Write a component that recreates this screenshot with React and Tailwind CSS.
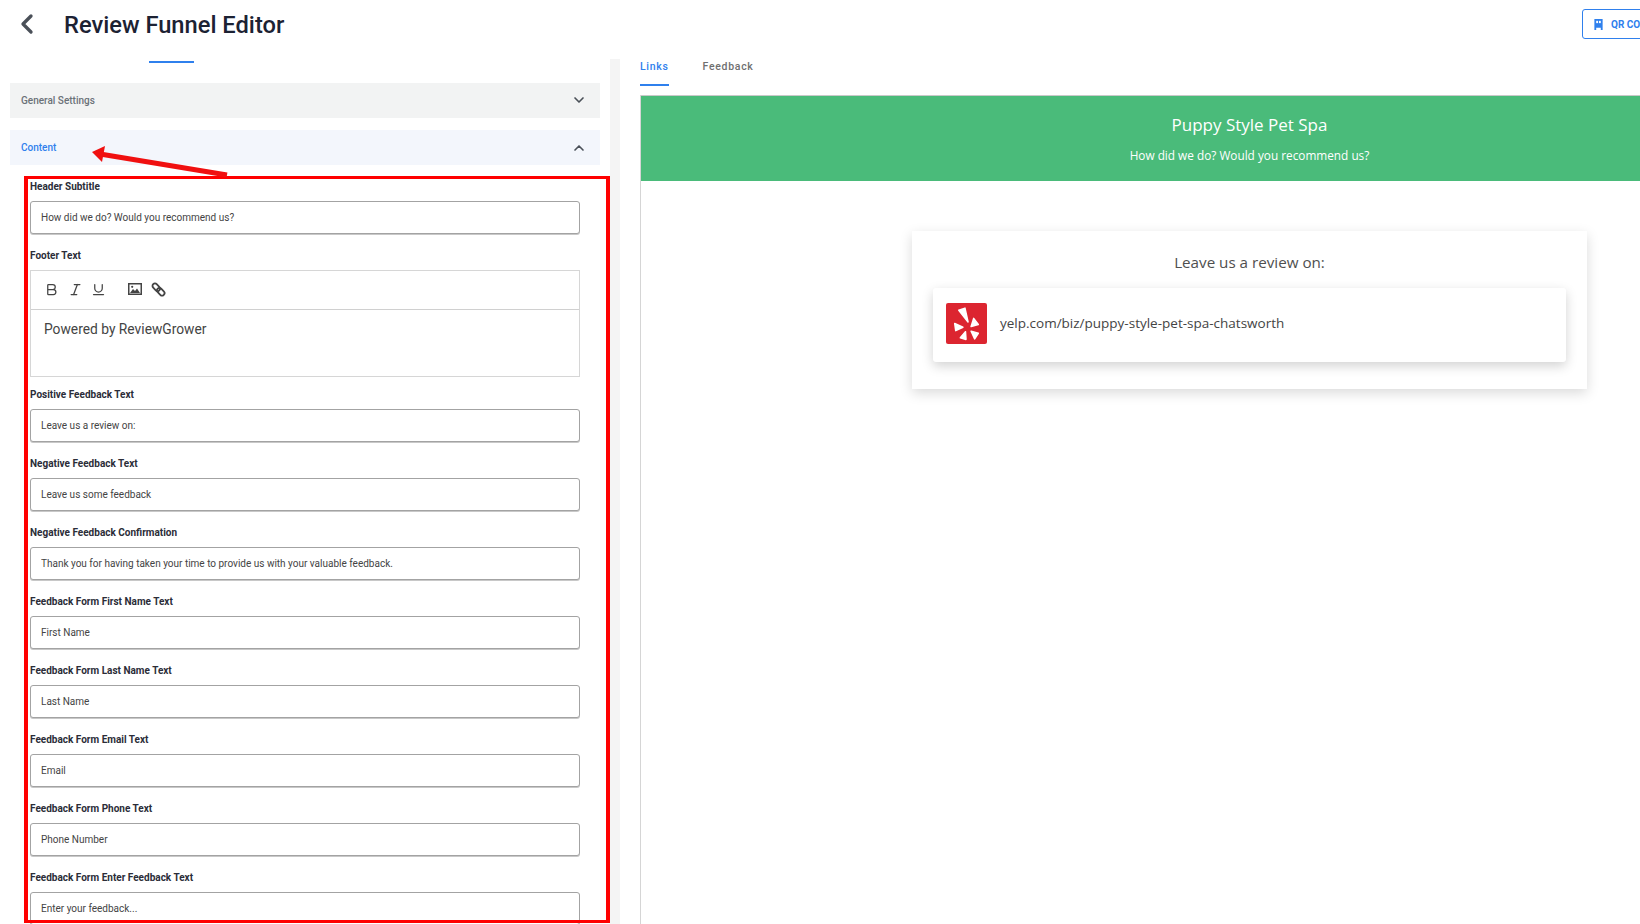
import React from "react";
import { ChevronLeft, ChevronDown, ChevronUp, Bold, Italic, Underline } from "lucide-react";

const fields = [
  { label: "Positive Feedback Text", value: "Leave us a review on:" },
  { label: "Negative Feedback Text", value: "Leave us some feedback" },
  {
    label: "Negative Feedback Confirmation",
    value: "Thank you for having taken your time to provide us with your valuable feedback.",
  },
  { label: "Feedback Form First Name Text", value: "First Name" },
  { label: "Feedback Form Last Name Text", value: "Last Name" },
  { label: "Feedback Form Email Text", value: "Email" },
  { label: "Feedback Form Phone Text", value: "Phone Number" },
  { label: "Feedback Form Enter Feedback Text", value: "Enter your feedback..." },
];

const Field = ({ label, value }) => (
  <div className="mb-[15px]">
    <div className="h-[14px] mb-[7px] text-[10px] leading-[14px] font-bold text-[#2b2d38]">{label}</div>
    <input
      readOnly
      value={value}
      className="block w-[550px] h-[33px] px-[10px] border border-[#a3a3a3] rounded-[3px] shadow-[0_1px_0_#c8c8c8] bg-white text-[10px] text-[#444] outline-none"
    />
  </div>
);

const YelpLogo = () => (
  <svg viewBox="0 0 40 40" className="w-[41px] h-[41px] shrink-0">
    <rect width="40" height="40" rx="2" fill="#dc2530" />
    <g fill="#fff" stroke="#fff" strokeWidth="1.5" strokeLinejoin="round">
      <polygon points="12.5,7 18.5,5 21.5,18.5" />
      <polygon points="8.5,20 16.5,23.6 9.5,27" />
      <polygon points="27,15 31.5,21 24.5,23" />
      <polygon points="24.5,27.5 31.5,29.5 28,35" />
      <polygon points="19,28 19.5,35.5 14,34" />
    </g>
  </svg>
);

const ImageIcon = () => (
  <svg viewBox="0 0 14 12" className="ml-[22px] w-[14px] h-[12px]">
    <rect x="0.75" y="0.75" width="12.5" height="10.5" fill="#fff" stroke="#444" strokeWidth="1.5" />
    <polygon points="2,10 5,6 7,8 9,5.5 12,10" fill="#444" />
    <circle cx="4.2" cy="3.8" r="1.1" fill="#444" />
  </svg>
);

const ChainIcon = () => (
  <svg viewBox="0 0 14 14" className="ml-[9px] w-[15px] h-[15px]" fill="none" stroke="#444" strokeWidth="1.7">
    <rect x="0.9" y="2.6" width="8" height="4.6" rx="2.3" transform="rotate(45 4.9 4.9)" />
    <rect x="5.1" y="6.8" width="8" height="4.6" rx="2.3" transform="rotate(45 9.1 9.1)" />
  </svg>
);

const QrBookIcon = () => (
  <svg viewBox="0 0 9 12" className="w-[9px] h-[11px] shrink-0" fill="#2f80ed">
    <path d="M0 0h9v12H7V9.5H2V12H0z" />
    <rect x="2" y="2" width="2" height="2.5" fill="#fff" />
    <rect x="5" y="2" width="2" height="2.5" fill="#fff" />
  </svg>
);

const App = () => {
  return (
    <div className="relative w-[1640px] h-[924px] overflow-hidden bg-white font-['Roboto',sans-serif]">
      <header className="h-[59px] flex items-start">
        <ChevronLeft className="w-[32px] h-[32px] mt-[8px] ml-[11px] text-[#4a5058]" strokeWidth={2.5} />
        <h1 className="ml-[21px] mt-[8px] text-[23.7px] leading-[34px] font-medium text-[#1c2233]">
          Review Funnel Editor
        </h1>
        <button className="ml-auto mt-[9px] w-[141px] shrink-0 h-[30px] -mr-[83px] flex items-center pl-[11px] gap-[8px] border border-[#2f80ed] rounded-[3px] bg-white text-[10px] font-bold text-[#2f80ed]">
          <QrBookIcon />
          QR CODE
        </button>
      </header>

      <div className="flex h-[865px]">
        <div className="w-[610px] pl-[10px] pr-[10px] shrink-0">
          <div className="ml-[139px] mt-[2px] w-[45px] h-[2px] bg-[#2f80ed]" />
          <div className="mt-[20px] h-[35px] pb-[1px] px-[11px] flex items-center justify-between bg-[#f2f3f3] text-[10px] font-medium text-[#6b7178]">
            General Settings
            <ChevronDown className="w-[16px] h-[16px] mr-[2px] text-[#4a5058]" strokeWidth={2.5} />
          </div>
          <div className="mt-[12px] h-[35px] px-[11px] flex items-center justify-between bg-[#f3f6fc] text-[10px] font-medium text-[#2f80ed]">
            Content
            <ChevronUp className="w-[16px] h-[16px] mr-[2px] text-[#4a5058]" strokeWidth={2.5} />
          </div>

          <div className="mt-[15px] pl-[20px]">
            <Field label="Header Subtitle" value="How did we do? Would you recommend us?" />

            <div className="mb-[11px]">
              <div className="h-[14px] mb-[7px] text-[10px] leading-[14px] font-bold text-[#2b2d38]">Footer Text</div>
              <div className="w-[550px] h-[107px] border border-[#d6d6d6] bg-white">
                <div className="h-[39px] pb-[2px] flex items-center pl-[13px] border-b border-[#d0d0d0] text-[#444]">
                  <Bold className="w-[15px] h-[15px]" strokeWidth={2} />
                  <Italic className="ml-[9px] w-[15px] h-[15px]" strokeWidth={2} />
                  <Underline className="ml-[8px] w-[15px] h-[15px]" strokeWidth={2} />
                  <ImageIcon />
                  <ChainIcon />
                </div>
                <div className="pl-[13px] pt-[10px] text-[13.8px] leading-[18px] text-[#444]">Powered by ReviewGrower</div>
              </div>
            </div>

            {fields.map((f) => (
              <Field key={f.label} label={f.label} value={f.value} />
            ))}
          </div>
        </div>
        <div className="w-[10px] shrink-0 bg-[#f4f4f4]" />

        <div className="flex-1 ml-[20px] min-w-0">
          <div className="h-[36px] flex items-start gap-[34px] text-[10.5px] tracking-[0.7px] font-medium">
            <div className="relative pt-[1px] h-[27px] leading-[14px] text-[#2f80ed]">
              Links
              <div className="absolute left-0 right-0 bottom-0 h-[2px] bg-[#2f80ed]" />
            </div>
            <div className="pt-[1px] leading-[14px] text-[#6f6f6f]">Feedback</div>
          </div>
          <div className="w-[1218px] h-[829px] border-l border-[#d5d5d5] font-['Open_Sans',sans-serif]">
            <div className="h-[86px] bg-[#4abb7a] border-t border-[#c9c9c9] flex flex-col items-center text-white">
              <div className="mt-[17px] text-[17px] leading-[24px]">Puppy Style Pet Spa</div>
              <div className="mt-[9px] text-[11.8px] leading-[18px]">How did we do? Would you recommend us?</div>
            </div>

            <div className="ml-[271px] mt-[50px] w-[675px] h-[158px] px-[21px] bg-white shadow-[0_4px_12px_rgba(0,0,0,0.15)]">
              <div className="h-[57px] pt-[6px] flex items-center justify-center text-[15.2px] text-[#4f4f4f]">
                Leave us a review on:
              </div>
              <div className="h-[74px] pb-[4px] flex items-center gap-[13px] pl-[13px] rounded-[3px] bg-white shadow-[0_4px_12px_rgba(0,0,0,0.18)] text-[13.5px] text-[#444]">
                <YelpLogo />
                yelp.com/biz/puppy-style-pet-spa-chatsworth
              </div>
            </div>
          </div>
        </div>
      </div>

      {/* red annotation over the form */}
      <div className="absolute left-[24px] top-[176px] w-[586px] h-[747px] border-[4px] border-t-[3px] border-b-[3px] border-[#ff0000] pointer-events-none" />
      <svg className="absolute left-0 top-0 w-[300px] h-[200px] pointer-events-none" viewBox="0 0 300 200">
        <line x1="227" y1="175" x2="100" y2="154" stroke="#f01010" strokeWidth="5" />
        <polygon points="92,152 105,146 102,162" fill="#f01010" />
      </svg>
    </div>
  );
};

export default App;
